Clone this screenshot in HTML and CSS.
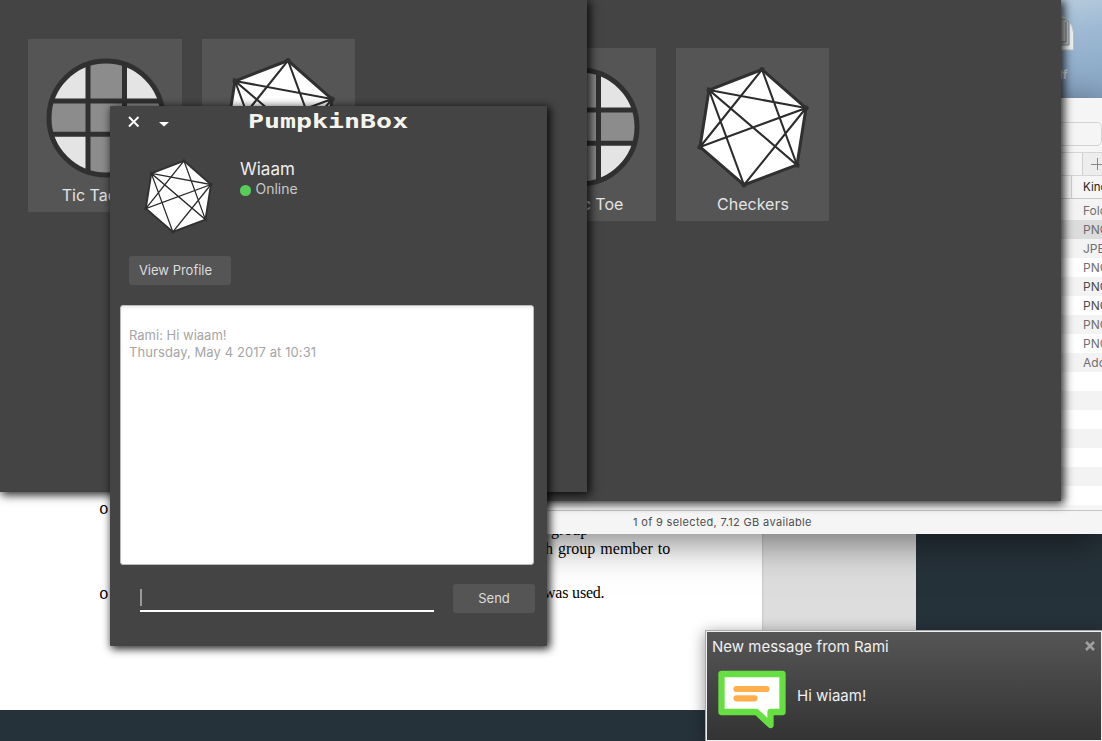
FILE: index.html
```html
<!DOCTYPE html>
<html lang="en">
<head>
<meta charset="utf-8">
<title>PumpkinBox</title>
<link rel="stylesheet" href="styles.css">
</head>
<body>
<svg class="defs" aria-hidden="true">
  <symbol id="poly" viewBox="0 0 130 135">
    <path class="face" d="M73 9.5 20 30 11 87 55 125 108 105 117 48Z"/>
    <path class="diag" d="M20 30 117 48 11 87 73 9.5 108 105 20 30 55 125 117 48"/>
    <path class="joint" d="M73 9.5h.1M20 30h.1M11 87h.1M55 125h.1M108 105h.1M117 48h.1"/>
  </symbol>
  <symbol id="grid" viewBox="0 0 120 120">
    <circle cx="60" cy="60" r="57" fill="#e4e4e4"/>
    <path d="M42 5h36v110H42zM3 43h114v33H3z" fill="#8c8c8c"/>
    <path d="M42 6v108M78.5 6v108M6 43h108M6 76.3h108" stroke="#303030" stroke-width="5"/>
    <circle cx="60" cy="60" r="57" fill="none" stroke="#303030" stroke-width="5"/>
  </symbol>
</svg>
<main class="desktop">
  <section class="doc">
    <ul class="bullets"><li>o</li><li>o</li></ul>
    <div class="lines"><p>group</p><p>h group member to</p><p>was used.</p></div>
  </section>

  <div class="sky">
    <svg class="file-icon" width="16" height="40" viewBox="0 0 16 40"><path d="M0 2Q12 8 12.500 20V37H0Z" fill="#f3f3f0" stroke="#b9bfc4"/><path d="M0 6H4L8 9V32H0" fill="#c9c9c6" stroke="#6b91ad"/><path d="M0 29h5V9" fill="none" stroke="#777"/></svg>
    <span class="file-name">df</span>
  </div>
  <section class="finder">
    <div class="toolbar"><div class="search"></div></div>
    <div class="tabs"><span class="plus"><svg width="12" height="12"><path d="M0 6.500h12M6.500 0v12" stroke="#888"/></svg></span></div>
    <div class="row head">Kind</div>
    <div class="rows">
      <div class="row">Folder</div><div class="row selected">PNG</div><div class="row">JPEG</div><div class="row">PNG</div><div class="row strong">PNG</div><div class="row strong">PNG</div><div class="row">PNG</div><div class="row">PNG</div><div class="row">Adobe</div><div class="row"></div><div class="row"></div><div class="row"></div><div class="row"></div><div class="row"></div><div class="row"></div><div class="row"></div>
    </div>
    <div class="status">1 of 9 selected, 7.12 GB available</div>
  </section>

  <section class="win games back">
    <div class="card"><svg class="ttt"><use href="#grid"/></svg><span>Tic Tac Toe</span></div>
    <div class="card"><svg class="hex"><use href="#poly"/></svg><span>Checkers</span></div>
  </section>
  <section class="win games front">
    <div class="card"><svg class="ttt"><use href="#grid"/></svg><span>Tic Tac Toe</span></div>
    <div class="card"><svg class="hex"><use href="#poly"/></svg><span>Checkers</span></div>
  </section>

  <section class="win chat">
    <header class="titlebar">
      <svg width="50" height="16" viewBox="0 0 50 16"><path d="M2 3 11.500 12.500M11.500 3 2 12.500" stroke="#fff" stroke-width="1.900"/><path d="M32 8h10l-5 4.600Z" fill="#fff"/></svg>
      <h1>PumpkinBox</h1>
    </header>
    <div class="profile">
      <svg class="avatar"><use href="#poly"/></svg>
      <div class="who"><div class="name">Wiaam</div><div class="presence"><i class="dot"></i>Online</div></div>
    </div>
    <button class="btn view">View Profile</button>
    <div class="log"><p>Rami: Hi wiaam!</p><p class="stamp">Thursday, May 4 2017 at 10:31</p></div>
    <div class="compose"><div class="field"><i class="caret"></i></div><button class="btn send">Send</button></div>
  </section>

  <aside class="toast">
    <div class="toast-head"><span>New message from Rami</span><svg width="10" height="10"><path d="M1 1 9 9M9 1 1 9" stroke="#a0a0a0" stroke-width="2.500"/></svg></div>
    <div class="toast-body">
      <svg width="69" height="59" viewBox="0 0 69 59"><path d="M3.500 4H64.500V42H52.500V55L38.500 42H3.500Z" fill="#fff" stroke="#67df43" stroke-width="6.300" stroke-linejoin="round"/><path d="M18.500 19H48.500M18.500 28.300H36.500" stroke="#ffae4b" stroke-width="6.200" stroke-linecap="round"/></svg>
      <span>Hi wiaam!</span>
    </div>
  </aside>
</main>
</body>
</html>
```
FILE: styles.css
```css
* { box-sizing: border-box; }
body { margin: 0; font-family: Inter, "Liberation Sans", sans-serif; }
p, h1, ul { margin: 0; padding: 0; }
.defs { position: absolute; width: 0; height: 0; }
.face { fill: #fff; stroke: #303030; stroke-width: 3; }
.diag { fill: none; stroke: #2c2c2c; stroke-width: 2.1; }
.joint { fill: none; stroke: #303030; stroke-width: 5; stroke-linecap: round; }

.desktop { position: relative; width: 1102px; height: 741px; overflow: hidden; background: #26323a; }

.doc { position: absolute; left: 0; top: 0; width: 916px; height: 710px; display: flex; background: linear-gradient(90deg, #fff 762px, #c8c8c8 762px, #ddd 764px); font: 16px/18px "Liberation Serif", serif; color: #000; }
.bullets { list-style: none; width: 545px; padding: 501px 0 0 99px; font: 16px/18px "Liberation Mono", monospace; }
.bullets li { margin-bottom: 67px; }
.lines { padding-top: 521px; }
.lines p { white-space: nowrap; }
.lines p:first-child { margin-left: 6px; }
.lines p:nth-child(2) { margin-top: 1px; word-spacing: 1px; }
.lines p:nth-child(3) { margin: 26px 0 0 -1px; letter-spacing: -.2px; }

.sky { position: absolute; left: 1040px; top: 0; width: 62px; height: 98px; padding: 13px 0 0 21px; background: linear-gradient(170deg, #b9cddd, #9db9d3 35%, #87a4c4); display: flex; flex-direction: column; }
.file-name { margin: 14px 0 0 -6px; font: bold 12px/15px Inter, sans-serif; color: #eee; }

.finder { position: absolute; left: 500px; top: 98px; width: 602px; height: 436px; background: #f5f5f5; box-shadow: 0 8px 36px rgba(0,0,0,.5); font-size: 12px; color: #6e6e6e; display: flex; flex-direction: column; }
.toolbar { height: 54px; padding-top: 24px; }
.search { height: 24px; border: 1px solid #d4d4d4; border-radius: 5px; }
.tabs { height: 24px; border: solid #d5d5d5; border-width: 1px 0; display: flex; justify-content: flex-end; }
.plus { width: 20px; border-left: 1px solid #d0d0d0; background: #ededed; padding: 5px 0 0 8px; overflow: hidden; display: flex; }
.row { height: 19px; flex: none; line-height: 19px; padding-left: 583px; white-space: nowrap; overflow: hidden; background: #fff; }
.head { height: 23px; line-height: 22px; font-size: 11.5px; color: #222; border-bottom: 1px solid #c8c8c8; background: linear-gradient(90deg, transparent 571px, #d0d0d0 571px 572px, transparent 572px), #f5f5f5; }
.rows { height: 311px; padding-top: 2px; overflow: hidden; display: flex; flex-direction: column; }
.rows .row:nth-child(odd) { background: #f3f3f3; }
.rows .selected { background: #dcdcdc; }
.strong { color: #4c4c4c; }
.status { height: 24px; border-top: 1px solid #c4c4c4; padding-left: 133px; font-size: 11px; letter-spacing: .34px; line-height: 23px; color: #4e4e4e; white-space: nowrap; }

.win { position: absolute; background: #444; box-shadow: 2px 2px 9px 1px rgba(0,0,0,.85); }
.games { display: flex; align-items: flex-start; gap: 20px; }
.back { left: 300px; top: 0; width: 761px; height: 501px; padding: 48px 0 0 202px; }
.front { left: 0; top: 0; width: 587px; height: 492px; padding: 39px 0 0 28px; }
.card { width: 154px; height: 173px; background: #555; padding-top: 19px; display: flex; flex-direction: column; align-items: center; color: #e4e4e4; font-size: 16px; line-height: 20px; }
.card + .card { width: 153px; padding-top: 12px; }
.card span { padding-left: 1px; white-space: nowrap; }
.ttt { width: 120px; height: 120px; margin: 0 0 7px 1px; }
.hex { width: 130px; height: 135px; margin: 0 0 -1px 3px; }

.chat { left: 110px; top: 106px; width: 437px; height: 540px; display: flex; flex-direction: column; border-radius: 1px; }
.titlebar { height: 49px; padding: 8px 0 0 17px; display: flex; }
.titlebar h1 { margin: -4px 0 0 71px; width: 110px; font: bold 19px/22px "DejaVu Sans Mono", monospace; color: #f4f4ec; transform: scaleX(1.4); transform-origin: 0 0; height: 22px; }
.profile { height: 101px; display: flex; padding-left: 29px; }
.avatar { width: 80px; height: 83px; }
.who { padding: 3px 0 0 21px; }
.name { font-size: 17px; line-height: 22px; color: #eee; }
.presence { display: flex; align-items: center; gap: 5px; font-size: 14px; line-height: 18px; color: #c8c8c8; }
.dot { width: 10.500px; height: 10.500px; margin-top: 3px; border-radius: 50%; background: #58cc58; }
.btn { border: 0; border-radius: 3px; background: #555; color: #ddd; font: 13px/29px Inter, sans-serif; height: 29px; padding: 0; }
.view { width: 102px; margin-left: 19px; padding-right: 9px; }
.log { width: 414px; height: 260px; margin: 20px 0 0 10px; padding: 21px 8px; border: 1px solid #bbb; border-radius: 3px; background: #fff; box-shadow: inset 0 2px 3px #eee; font-size: 13px; line-height: 17px; color: #a5a5a5; }
.stamp { letter-spacing: .08px; }
.compose { display: flex; margin: 18px 0 0 30px; gap: 19px; }
.field { width: 294px; height: 29px; border-bottom: 2px solid #fff; padding-top: 6px; }
.caret { display: block; width: 2px; height: 17px; background: #999; }
.send { width: 82px; margin-top: 1px; }

.toast { position: absolute; left: 705px; top: 630px; width: 398px; height: 112px; border: 1px solid #aaa; outline: 1px solid #eee; outline-offset: -2px; background: linear-gradient(#565656, #333); box-shadow: 0 3px 14px rgba(0,0,0,.45); color: #f0f0f0; padding: 6px 0 0 6px; font-size: 15px; }
.toast-head { display: flex; justify-content: space-between; align-items: center; line-height: 20px; padding-right: 7px; }
.toast-head svg { margin-top: -3px; }
.toast-body { display: flex; gap: 10px; padding: 13px 0 0 6px; line-height: 52px; }
```
